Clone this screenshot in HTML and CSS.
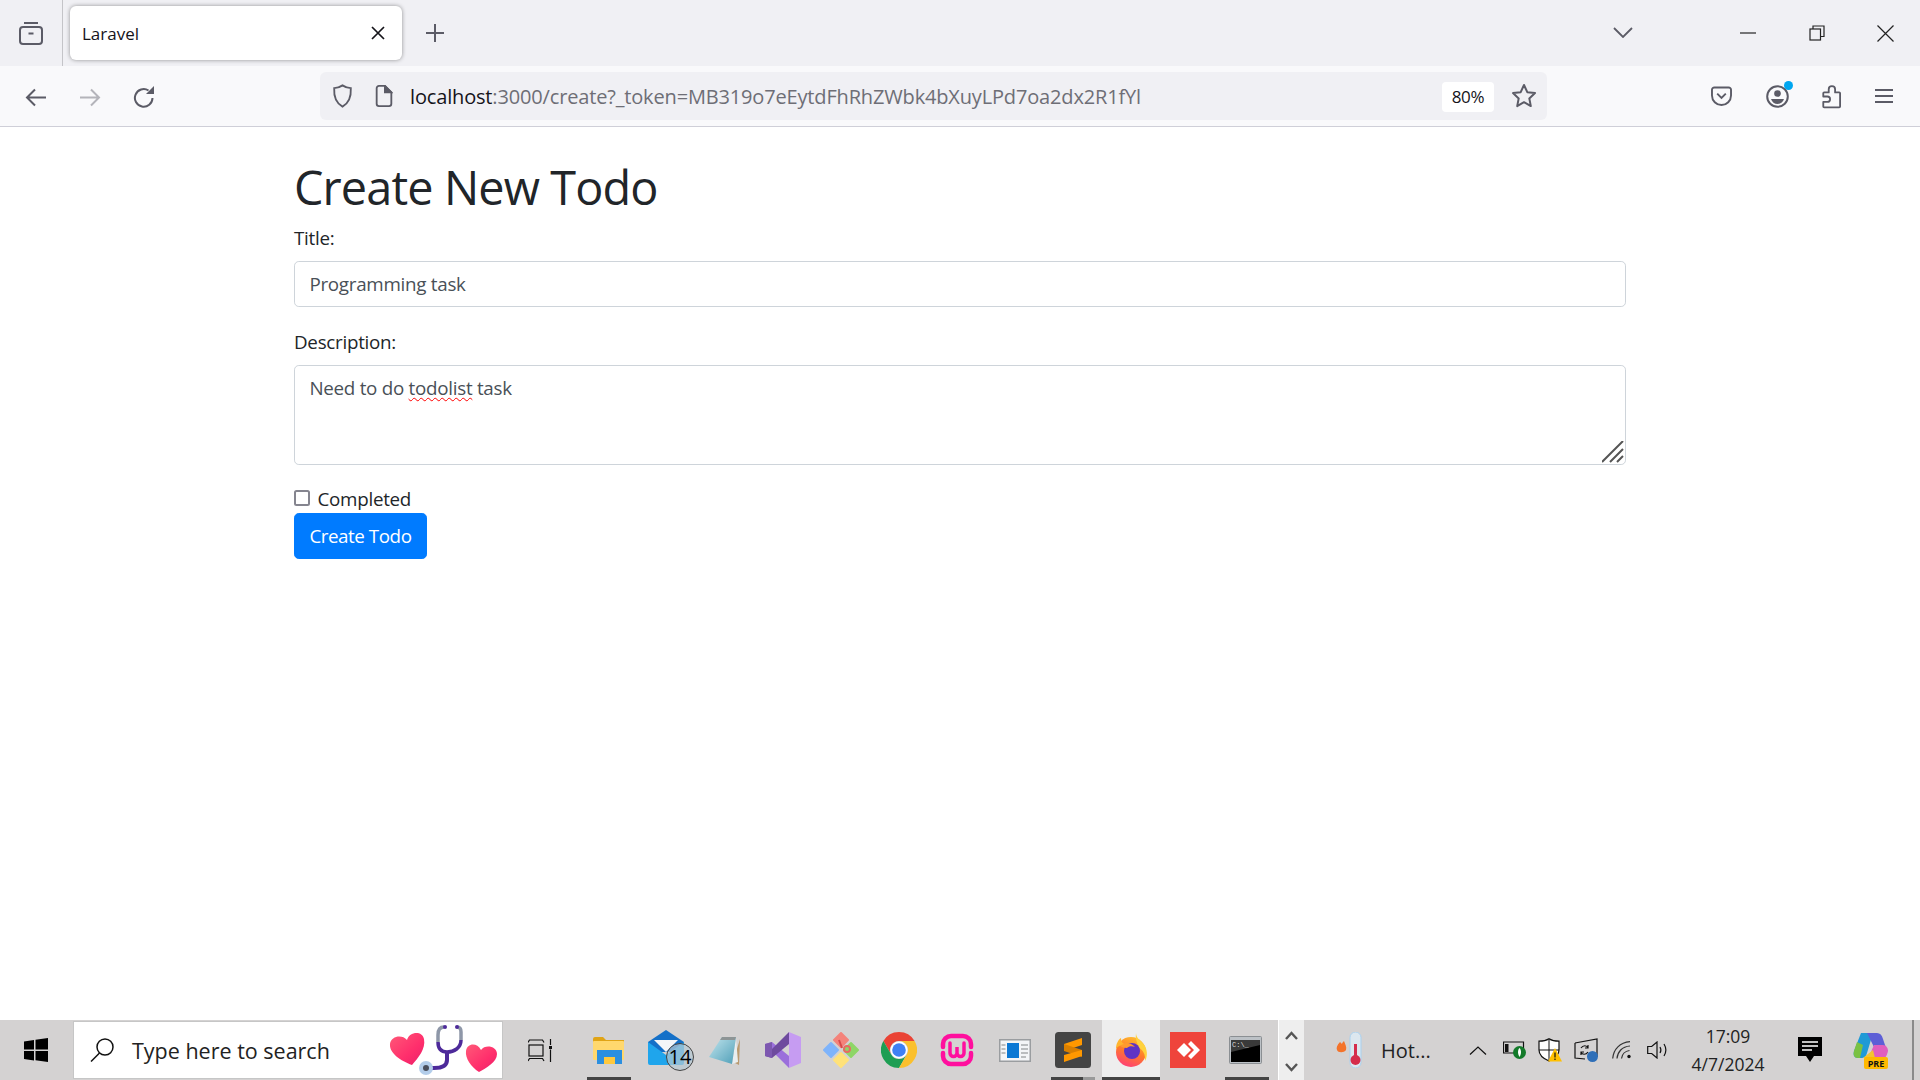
FILE: index.html
```html
<!DOCTYPE html>
<html>
<head>
<meta charset="UTF-8">
<title>Laravel</title>
<link rel="stylesheet" href="styles.css">
</head>
<body>

<!-- browser window chrome -->
<div class="tabbar">
  <div class="tabbar-left">
    <svg width="24" height="24" viewBox="0 0 24 24" fill="none" stroke="#5b5b66" stroke-width="2"><path d="M5 2h14"/><rect x="1" y="6" width="22" height="17" rx="3"/><path d="M9.500 12.500h5"/></svg>
  </div>
  <div class="tab">
    <span class="tab-title">Laravel</span>
    <svg width="14" height="14" viewBox="0 0 14 14" stroke="#15141a" stroke-width="1.700"><path d="M1 1l12 12M13 1L1 13"/></svg>
  </div>
  <div class="newtab">
    <svg width="18" height="18" viewBox="0 0 18 18" stroke="#5b5b66" stroke-width="2"><path d="M9 0v18M0 9h18"/></svg>
  </div>
  <div class="tabbar-space"></div>
  <svg class="tablist" width="20" height="11" viewBox="0 0 20 11" fill="none" stroke="#5b5b66" stroke-width="1.800"><path d="M1 1l9 9 9-9"/></svg>
  <div class="winbtns">
    <div class="winbtn"><svg width="16" height="16" viewBox="0 0 16 16" stroke="#222" stroke-width="1.200"><path d="M0 8h16"/></svg></div>
    <div class="winbtn"><svg width="16" height="16" viewBox="0 0 16 16" fill="none" stroke="#222" stroke-width="1.200"><rect x="1" y="4" width="10.500" height="11"/><path d="M4 4V1h11v10.500h-3.500"/></svg></div>
    <div class="winbtn"><svg width="17" height="17" viewBox="0 0 17 17" stroke="#222" stroke-width="1.200"><path d="M.5.5l16 16M16.500.5l-16 16"/></svg></div>
  </div>
</div>

<div class="toolbar">
  <div class="navbtns">
    <svg width="21" height="19" viewBox="0 0 21 19" fill="none" stroke="#5b5b66" stroke-width="2"><path d="M21 9.500H2M10 1.500l-8 8 8 8"/></svg>
    <svg width="21" height="19" viewBox="0 0 21 19" fill="none" stroke="#b4b4ba" stroke-width="2"><path d="M0 9.500h19M11 1.500l8 8-8 8"/></svg>
    <svg class="reload" width="22" height="22" viewBox="0 0 22 22" fill="none" stroke="#5b5b66" stroke-width="2"><path d="M19.500 12a8.800 8.800 0 1 1-4-7.500"/><path d="M21 0v8h-8z" fill="#5b5b66" stroke="none"/></svg>
  </div>
  <div class="urlbar">
    <svg width="21" height="24" viewBox="0 0 22 26" fill="none" stroke="#5b5b66" stroke-width="2"><path d="M11 1.500c3 2 6 3 9 3 .5 9-1.500 16-9 20-7.500-4-9.500-11-9-20 3 0 6-1 9-3z"/></svg>
    <svg class="pageico" width="18" height="22" viewBox="0 0 18 24" fill="none" stroke="#5b5b66" stroke-width="2"><path d="M3.500 1H10l7 7v12.500a2.500 2.500 0 0 1-2.500 2.500h-11A2.500 2.500 0 0 1 1 20.500v-17A2.500 2.500 0 0 1 3.500 1z"/><path d="M10 1v7h7z" fill="#5b5b66"/></svg>
    <div class="url"><span class="url-host">localhost</span>:3000/create?_token=MB319o7eEytdFhRhZWbk4bXuyLPd7oa2dx2R1fYl</div>
    <div class="zoombadge">80%</div>
    <svg class="star" width="26" height="26" viewBox="0 0 26 26" fill="none" stroke="#5b5b66" stroke-width="2" stroke-linejoin="round"><path d="M13 2l3.300 7.200 7.700.9-5.700 5.300 1.500 7.700L13 19.200l-6.800 3.900 1.500-7.700L2 10.100l7.700-.9z"/></svg>
  </div>
  <div class="toolbar-right">
    <svg width="21" height="20" viewBox="0 0 22 21" fill="none" stroke="#5b5b66" stroke-width="2"><path d="M3.500 1.500h15A2.500 2.500 0 0 1 21 4v6a10 10 0 0 1-20 0V4a2.500 2.500 0 0 1 2.500-2.500z"/><path d="M6.500 8L11 12.500 15.500 8"/></svg>
    <span class="account">
      <svg width="23" height="23" viewBox="0 0 23 23" fill="none" stroke="#5b5b66" stroke-width="2"><circle cx="11.500" cy="11.500" r="10.300"/><circle cx="11.500" cy="8.500" r="3.300" fill="#5b5b66" stroke="none"/><path d="M5 14h13c-1 3-3.500 5-6.500 5S6 17 5 14z" fill="#5b5b66" stroke="none"/></svg>
      <i class="account-dot"></i>
    </span>
    <svg class="extensions" width="20" height="25" viewBox="0 0 22 26" fill="none" stroke="#5b5b66" stroke-width="2" stroke-linejoin="round"><path d="M12 1.500c2 0 3.500 1.500 3.500 3.500v3.500H20a1 1 0 0 1 1 1V24a1 1 0 0 1-1 1H3.500a1 1 0 0 1-1-1v-5H7a2.500 2.500 0 0 0 0-6H2.500V9.500a1 1 0 0 1 1-1h5V5c0-2 1.500-3.500 3.500-3.500z"/></svg>
    <svg width="18" height="16" viewBox="0 0 18 16" stroke="#5b5b66" stroke-width="2"><path d="M0 2h18M0 8h18M0 14h18"/></svg>
  </div>
</div>

<!-- page -->
<div class="page">
  <div class="container">
    <h1>Create New Todo</h1>
    <div class="form-group">
      <label>Title:</label>
      <div class="form-control">Programming task</div>
    </div>
    <div class="form-group">
      <label>Description:</label>
      <div class="form-control textarea">Need to do <span class="misspelled">todolist</span> task
        <svg class="grip" width="22" height="22" viewBox="0 0 22 22" stroke="#555" stroke-width="2"><path d="M0 21L21 0M8 21L21 8M15 21l6-6"/></svg>
      </div>
    </div>
    <div class="form-check">
      <span class="checkbox"></span>
      <label>Completed</label>
    </div>
    <button class="btn">Create Todo</button>
  </div>
</div>

<!-- windows taskbar -->
<div class="taskbar">
  <div class="startbtn">
    <svg width="24" height="24" viewBox="0 0 24 24" fill="#000"><path d="M0 3.400l10-1.400v9.500H0zM11.500 1.800L24 0v11.500H11.500zM0 13h10v9.500L0 21zM11.500 13H24v11l-12.500-1.800z"/></svg>
  </div>
  <div class="searchbox">
    <svg width="24" height="24" viewBox="0 0 24 24" fill="none" stroke="#111" stroke-width="1.500"><circle cx="15" cy="9" r="8"/><path d="M9.500 15L1 23.500"/></svg>
    <span class="searchtext">Type here to search</span>
    <svg class="searchart" width="118" height="56" viewBox="0 0 118 56">
      <defs>
        <linearGradient id="heart" x1="0" y1="0" x2="1" y2="1"><stop offset="0" stop-color="#ff5a78"/><stop offset=".6" stop-color="#ff2e6c"/><stop offset="1" stop-color="#e8206a"/></linearGradient>
      </defs>
      <path d="M28 43C17 39 5 31 6 22C7 14 18 12 23 18C25 10 38 8 40 17C42 27 34 36 28 43Z" fill="url(#heart)"/>
      <path d="M95 50C87 45 81 36 82 29C83 21 93 20 97 28C101 22 113 24 113 32C113 40 102 46 95 50Z" fill="url(#heart)"/>
      <g fill="none" stroke-width="3.500">
        <path d="M60 5C55 5 54 9 54 13V20" stroke="#8e97a8"/>
        <path d="M73 5C76 5 77 7 77 10V18" stroke="#8e97a8"/>
        <path d="M54 20C54 28 58 30 63 30C70 30 77 26 77 18" stroke="#4d2a9a"/>
        <path d="M63 30V38C63 44 58 46 50 46H44" stroke="#4d2a9a" stroke-width="4"/>
      </g>
      <circle cx="61" cy="5" r="2" fill="#4d2a9a"/><circle cx="73" cy="5" r="2" fill="#4d2a9a"/>
      <circle cx="42" cy="46" r="7" fill="#b3cdea"/><circle cx="42" cy="46" r="3" fill="#4a4f5c"/>
    </svg>
  </div>
  <div class="taskview">
    <svg width="24" height="23" viewBox="0 0 24 23" fill="none" stroke="#111" stroke-width="1.200"><path d="M0 3.500L1.500 1H14.500L16 3.500"/><rect x="1" y="6" width="14" height="11"/><path d="M0 19.500L1.500 22H14.500L16 19.500" transform="matrix(1 0 0 -1 0 41.500)"/><path d="M22.500 0v6M22.500 10.500V23"/><rect x="21" y="7" width="3" height="3" fill="#111" stroke="none"/></svg>
  </div>
  <div class="apps">
    <div class="app running wide">
      <svg width="34" height="27" viewBox="0 0 34 27"><path d="M1 2a2 2 0 0 1 2-2h8l3 3h18v6H1z" fill="#e0a416"/><rect x="1" y="4" width="31" height="19" rx="1" fill="#ffd86e"/><path d="M5 27V13h25v14h-7v-7H12v7z" fill="#2b8fe0"/><rect x="12" y="20" width="11" height="7" fill="#ffc83d"/></svg>
    </div>
    <div class="app mail">
      <svg width="46" height="41" viewBox="0 0 46 41"><path d="M0 12L18 0l18 12v10H0z" fill="#1470c8"/><path d="M6 10h24l-12 12z" fill="#f4f6f8"/><path d="M0 12l18 13 18-13v21a2 2 0 0 1-2 2H2a2 2 0 0 1-2-2z" fill="#1fa5ec"/><circle cx="32" cy="27" r="13.500" fill="#b5c8d2" fill-opacity=".7" stroke="#444"/><text x="32" y="34" class="mailcount">14</text></svg>
    </div>
    <div class="app">
      <svg width="32" height="30" viewBox="0 0 32 30">
        <defs><linearGradient id="pad" x1="0" y1="0" x2="1" y2="1"><stop offset="0" stop-color="#c4e6ee"/><stop offset="1" stop-color="#4f9fb8"/></linearGradient></defs>
        <path d="M31 4l-1 26-6-3z" fill="#b99a70"/><path d="M27 3l2 24-6 2z" fill="#e8eef0"/><path d="M13 2h14L23 29 0 22z" fill="url(#pad)"/><path d="M13 2h14l-1 3H11z" fill="#8d9596"/>
      </svg>
    </div>
    <div class="app">
      <svg width="36" height="36" viewBox="0 0 36 36"><path d="M24 0l12 5v26l-12 5z" fill="#c69cf2"/><path d="M24 36V24L7 10 0 12z" fill="#9b6fdb"/><path d="M24 0v12L7 26l-7-2z" fill="#6e4a9e"/><path d="M0 12l7-2v16l-7-2z" fill="#7d58b0"/></svg>
    </div>
    <div class="app">
      <svg width="36" height="36" viewBox="0 0 36 36" stroke-linejoin="round" stroke-width="2"><path d="M18 1l7 7-7 7-7-7z" fill="#f4837b" stroke="#f4837b"/><path d="M8 11l7 7-7 7-7-7z" fill="#7fb4fb" stroke="#7fb4fb"/><path d="M28 11l7 7-7 7-7-7z" fill="#8ed667" stroke="#8ed667"/><path d="M18 21l7 7-7 7-7-7z" fill="#ffe27a" stroke="#ffe27a"/><path d="M16 8l3 8" stroke="#d94a4a" fill="none"/><circle cx="24" cy="17" r="3" fill="#8ed667" stroke="#e86a62"/></svg>
    </div>
    <div class="app">
      <svg width="36" height="36" viewBox="0 0 36 36"><path d="M18 0A18 18 0 0 1 33.600 9H18A9 9 0 0 0 10.200 22.500L2.400 9A18 18 0 0 1 18 0Z" fill="#ea4335"/><path d="M18 36A18 18 0 0 1 2.400 9L10.200 22.500A9 9 0 0 0 25.800 22.500Z" fill="#1e9e53"/><path d="M33.600 9A18 18 0 0 1 18 36L25.800 22.500A9 9 0 0 0 18 9Z" fill="#fbc02d"/><circle cx="18" cy="18" r="8.500" fill="#fff"/><circle cx="18" cy="18" r="6.800" fill="#3f80f4"/></svg>
    </div>
    <div class="app">
      <svg width="34" height="34" viewBox="0 0 34 34" fill="none" stroke="#ff0f9e" stroke-width="4.500" stroke-linecap="round"><path d="M3 14V11a8 8 0 0 1 8-8h12a8 8 0 0 1 8 8v3M3 20v3a8 8 0 0 0 8 8h12a8 8 0 0 0 8-8v-3"/><path d="M10 10v10a3.500 3.500 0 0 0 7 0v-6 6a3.500 3.500 0 0 0 7 0V10" stroke-width="3.500"/></svg>
    </div>
    <div class="app">
      <svg width="32" height="23" viewBox="0 0 32 23"><rect x=".75" y=".75" width="30.500" height="21.500" fill="#f3f5f7" stroke="#9a9da0" stroke-width="1.500"/><rect x="8" y="4" width="12" height="15" fill="#0a78d4"/><path d="M2.500 6h4M2.500 10h4M2.500 14h4M22 6h7M22 10h7M22 14h7M22 18h5" stroke="#a8abad" stroke-width="1.500"/></svg>
    </div>
    <div class="app running stacked">
      <svg width="36" height="36" viewBox="0 0 36 36"><rect width="36" height="36" rx="3.500" fill="#444"/><path d="M27 6v7L9 19v-7z" fill="#ff9800"/><path d="M9 12v7l18 6v-7z" fill="#d97f00"/><path d="M27 18v6L9 30v-7z" fill="#ff9800"/></svg>
    </div>
    <div class="app active">
      <svg width="34" height="34" viewBox="0 0 34 34">
        <defs>
          <linearGradient id="fox" x1=".7" y1="0" x2=".3" y2="1"><stop offset="0" stop-color="#ffbd2e"/><stop offset=".5" stop-color="#ff7a2a"/><stop offset="1" stop-color="#ff3d78"/></linearGradient>
        </defs>
        <circle cx="17" cy="19" r="15" fill="url(#fox)"/>
        <path d="M22 0c0 6 6 8 9 13 3 6 2 12 0 15 .5-7-2-11-6-13-2-5-4-10-3-15z" fill="#ffd23e"/>
        <circle cx="18" cy="18" r="8" fill="#5f33c4"/>
        <path d="M5 12c5-3 12-3 16 2-3-1-6-1-8 1-3 0-6-1-8-3z" fill="#ff9a2e"/>
        <path d="M2 16c0-5 2-9 5-11 0 3 1 5 3 6-3 1-6 2-8 5z" fill="#ffb52e"/>
      </svg>
    </div>
    <div class="app anydesk">
      <svg width="36" height="36" viewBox="0 0 36 36"><rect width="36" height="36" fill="#ef443b"/><path d="M14 11l7 7-7 7-7-7z" fill="#fff"/><path d="M21 9l9 9-9 9-3-3 6-6-6-6z" fill="#fff"/></svg>
    </div>
    <div class="app running terminal">
      <svg width="33" height="28" viewBox="0 0 33 28">
        <rect x=".5" y=".5" width="32" height="27" rx="1" fill="#bcc1c6" stroke="#8b8f93"/>
        <rect x="2" y="4" width="29" height="22" fill="#000"/>
        <path d="M2 4h29v5L2 16z" fill="#3a3a3a"/>
        <text x="3" y="11" class="cmdtext">C:\_</text>
      </svg>
    </div>
  </div>
  <div class="appscroll">
    <svg width="13" height="9" viewBox="0 0 13 9" fill="none" stroke="#555" stroke-width="2.400"><path d="M1 8l5.500-6L12 8"/></svg>
    <svg width="13" height="9" viewBox="0 0 13 9" fill="none" stroke="#555" stroke-width="2.400"><path d="M1 1l5.500 6L12 1"/></svg>
  </div>
  <div class="weather">
    <svg width="30" height="36" viewBox="0 0 30 36"><path d="M4 10C1 13 0 16 1 18c1 3 7 3 9 0 1-3-1-6-2-9-1 1-2 2-2 3z" fill="#f4732a"/><rect x="14" y="0" width="11" height="36" rx="5.500" fill="#dce7ef" stroke="#a9d1f0"/><circle cx="19.500" cy="28" r="5" fill="#d52d4c"/><rect x="18" y="12" width="3" height="16" fill="#d52d4c"/></svg>
    <span class="weather-text">Hot...</span>
  </div>
  <div class="tray">
    <svg width="18" height="9" viewBox="0 0 18 9" fill="none" stroke="#111" stroke-width="1.200"><path d="M1 8.500L9 1l8 7.500"/></svg>
    <svg width="23" height="18" viewBox="0 0 23 18"><path d="M.5 1h20v11H.5z" fill="none" stroke="#111" stroke-width="1.200"/><rect x="2" y="3" width="3.500" height="8" fill="#111"/><circle cx="16.500" cy="11.500" r="6.500" fill="#137a2a"/><path d="M16.500 7c2 2 2 6 0 9-2-3-2-7 0-9z" fill="#fff"/></svg>
    <svg width="24" height="24" viewBox="0 0 24 24"><path d="M11 .7c3 2 6 2.500 10 2.500V12c0 5-4 8.500-10 11C5 20.500 1 17 1 12V3.200c4 0 7-.5 10-2.500z" fill="#fff" stroke="#111" stroke-width="1.200"/><path d="M11 1v21M1 12h20" stroke="#111"/><path d="M17 10l7 13.500H10z" fill="#ffc000"/><path d="M17 14.500v5M17 20.500V22" stroke="#111" stroke-width="1.200"/></svg>
    <svg width="24" height="24" viewBox="0 0 24 24" fill="none" stroke="#111" stroke-width="1.200"><path d="M1 5L23 1v18M1 5v15l10 1"/><path d="M7 10c2-3 6-3 7 0M14 7v3h-3M14 14c-2 3-6 3-7 0M7 17v-3h3"/><circle cx="18.500" cy="18.500" r="5.500" fill="#2f6fb8" stroke="none"/></svg>
    <svg width="20" height="18" viewBox="0 0 20 18" fill="none" stroke="#333" stroke-width="1.200"><path d="M.7 17.500C1.500 8 8 1.500 18 .7M5 17.500C5.500 11 10 5.500 18 5M9.500 17.500c.5-4 3.500-7.500 8-8"/><circle cx="17" cy="15.500" r="1.700" fill="#111" stroke="none"/></svg>
    <svg width="22" height="18" viewBox="0 0 22 18" fill="none" stroke="#111" stroke-width="1.200"><path d="M.7 5.500h4L10 1v16l-5.300-4.500h-4z"/><path d="M13 6c1.200 2 1.200 4 0 6M17 3c2.500 4 2.500 8 0 12"/></svg>
  </div>
  <div class="clock">
    <span>17:09</span>
    <span>4/7/2024</span>
  </div>
  <div class="notif">
    <svg width="24" height="26" viewBox="0 0 24 26"><path d="M0 0h24v19h-8l-4 6-4-6H0z" fill="#000"/><path d="M4 5h16M4 9h16M4 13h10" stroke="#fff" stroke-width="1.300"/></svg>
  </div>
  <div class="copilot">
    <svg width="36" height="38" viewBox="0 0 36 38">
      <path d="M8 2h12l-6 20c-1 4-3 5-6 5H5C1 27 0 24 1 20z" fill="#1f9ad6"/>
      <path d="M5 27c-4 0-5-3-4-7l3-9 6 3-3 13z" fill="#7ac143"/>
      <path d="M14 2h10c3 0 5 2 6 6l4 12-13-4z" fill="#5d5fd6"/>
      <path d="M21 14h9c3 0 5 3 5 6-1 5-4 10-8 10H14z" fill="#e05fbe"/>
      <path d="M10 27h12l-2-8z" fill="#f4c430"/>
      <rect x="11" y="26" width="24" height="12" rx="2" fill="#ffb900"/>
      <text x="23" y="36" class="pretext">PRE</text>
    </svg>
  </div>
  <div class="showdesktop"></div>
</div>

</body>
</html>
```

FILE: styles.css
```css
html {
  font-size: 19.2px;
}

body {
  margin: 0;
  height: 100vh;
  overflow: hidden;
  display: flex;
  flex-direction: column;
  font-family: "Open Sans", "Noto Sans", sans-serif;
  color: #212529;
  background: #fff;
}

/* tabs row */
.tabbar {
  height: 66px;
  background: #f0f0f4;
  display: flex;
  align-items: center;
  flex: none;
}

.tabbar-left {
  width: 62px;
  height: 66px;
  border-right: 1px solid #c4c4c8;
  display: flex;
  align-items: center;
  justify-content: center;
}

.tab {
  width: 332px;
  height: 54px;
  margin-left: 7px;
  padding: 0 17px 0 12px;
  box-sizing: border-box;
  background: #fff;
  border-radius: 6px;
  box-shadow: 0 0 4px rgba(0, 0, 0, .4);
  display: flex;
  align-items: center;
  justify-content: space-between;
}

.tab-title {
  font-size: 17px;
  color: #15141a;
}

.newtab {
  margin-left: 24px;
  display: flex;
}

.tabbar-space {
  flex: 1;
}

.tablist {
  margin-right: 80px;
  margin-bottom: 2px;
}

.winbtns {
  display: flex;
}

.winbtn {
  width: 69px;
  height: 66px;
  display: flex;
  align-items: center;
  justify-content: center;
}

/* nav row */
.toolbar {
  height: 60px;
  background: #f9f9fb;
  border-bottom: 1px solid #cfcfd8;
  display: flex;
  align-items: center;
  flex: none;
}

.navbtns {
  width: 320px;
  padding: 2px 0 0 25px;
  box-sizing: border-box;
  display: flex;
  align-items: center;
  gap: 34px;
}

.reload {
  margin-left: -2px;
}

.urlbar {
  width: 1227px;
  height: 48px;
  background: #f0f0f4;
  border-radius: 6px;
  display: flex;
  align-items: center;
  padding: 0 10px 0 12px;
  box-sizing: border-box;
}

.pageico {
  margin-left: 22px;
}

.url {
  flex: 1;
  margin-left: 17px;
  padding-top: 1px;
  font-size: 20px;
  letter-spacing: -.16px;
  color: #6e6e76;
  white-space: nowrap;
}

.url-host {
  color: #15141a;
}

.zoombadge {
  width: 52px;
  height: 30px;
  margin-top: 1px;
  line-height: 30px;
  background: #fff;
  border-radius: 4px;
  text-align: center;
  font-size: 17px;
  letter-spacing: -.3px;
  color: #15141a;
}

.star {
  margin-left: 17px;
}

.toolbar-right {
  flex: 1;
  padding: 0 27px 0 164px;
  display: flex;
  align-items: center;
  justify-content: space-between;
}

.extensions {
  margin-left: -2px;
}

.account {
  position: relative;
  display: flex;
}

.account-dot {
  position: absolute;
  top: -4px;
  right: -4px;
  width: 9px;
  height: 9px;
  border-radius: 50%;
  background: #00a6f0;
}

/* page content */
.page {
  flex: 1;
  background: #fff;
}

.container {
  width: 1332px;
  margin: 0 auto;
  padding-top: 1.5rem;
  font-size: 18.8px;
  letter-spacing: -.27px;
}

h1 {
  margin: 0 0 6px;
  padding-top: 3.500px;
  font-size: 46.800px;
  font-weight: 400;
  letter-spacing: -.87px;
  line-height: 57.600px;
}

.form-group {
  margin-bottom: 19.700px;
}

label {
  display: inline-block;
  padding-top: 1px;
  margin-bottom: 8.600px;
  line-height: 28.800px;
}

.form-control {
  height: 45.600px;
  box-sizing: border-box;
  padding: 8.200px 14.400px 0;
  border: 1px solid #ced4da;
  border-radius: 4.800px;
  line-height: 28.800px;
  color: #495057;
}

.textarea {
  position: relative;
  height: 100px;
}

.misspelled {
  text-decoration: underline wavy #f00;
  text-decoration-thickness: 1.200px;
  text-underline-offset: 2px;
}

.grip {
  position: absolute;
  right: 1px;
  bottom: 1px;
}

.form-check {
  height: 28.800px;
  display: flex;
  align-items: center;
}

.form-check label {
  margin: 0 0 0 7.500px;
}

.checkbox {
  width: 16px;
  height: 16px;
  box-sizing: border-box;
  border: 2px solid #85858f;
  border-radius: 2.500px;
  background: #fff;
  margin-bottom: 2px;
}

.btn {
  display: block;
  height: 45.600px;
  padding: 0 14.400px;
  border: 1px solid #007bff;
  border-radius: 4.800px;
  background: #007bff;
  color: #fff;
  font-family: inherit;
  font-size: 18.800px;
  letter-spacing: -.45px;
}

/* taskbar */
.taskbar {
  height: 60px;
  background: #d4d2d2;
  display: flex;
  align-items: center;
  flex: none;
}

.startbtn {
  width: 72px;
  margin-right: 1px;
  display: flex;
  justify-content: center;
}

.searchbox {
  width: 430px;
  height: 58px;
  box-sizing: border-box;
  background: #fff;
  border: 1px solid #c6c6c6;
  display: flex;
  align-items: center;
  padding-left: 16px;
  position: relative;
}

.searchtext {
  margin-left: 18px;
  padding-top: 1px;
  font-size: 21.500px;
  color: #222;
  white-space: nowrap;
}

.searchart {
  position: absolute;
  right: 0;
  top: 0;
}

.taskview {
  width: 77px;
  padding-right: 3px;
  box-sizing: border-box;
  display: flex;
  justify-content: center;
}

.apps {
  display: flex;
  height: 60px;
}

.app {
  width: 58px;
  height: 60px;
  display: flex;
  align-items: center;
  justify-content: center;
  position: relative;
}

.app.running::after,
.app.active::after {
  content: "";
  position: absolute;
  left: 7px;
  right: 7px;
  bottom: 0;
  height: 3px;
  background: #444;
}

.app.stacked::before {
  content: "";
  position: absolute;
  right: 7px;
  bottom: 0;
  width: 12px;
  height: 3px;
  background: #999;
  z-index: 1;
}

.app.active {
  background: #eee;
}

.app.active::after {
  left: 0;
  right: 0;
}

.app.mail svg {
  margin-left: 8px;
}

.app.anydesk svg {
  margin-right: 2px;
}

.app.terminal svg {
  margin-right: 4px;
}

.mailcount {
  font-family: "Open Sans", sans-serif;
  font-size: 20px;
  text-anchor: middle;
  fill: #000;
}

.cmdtext {
  font-family: "Liberation Mono", monospace;
  font-size: 7px;
  fill: #ddd;
}

.pretext {
  font-family: "Open Sans", sans-serif;
  font-weight: 700;
  font-size: 9px;
  text-anchor: middle;
  fill: #111;
}

.appscroll {
  width: 25px;
  height: 41px;
  margin-left: 2px;
  background: #eee;
  border-left: 1px solid #fff;
  display: flex;
  flex-direction: column;
  align-items: center;
  justify-content: space-between;
  padding: 11px 0 8px;
}

.weather {
  width: 156px;
  padding-left: 32px;
  box-sizing: border-box;
  display: flex;
  align-items: center;
  gap: 15px;
}

.weather-text {
  font-size: 20px;
  color: #222;
}

.tray {
  display: grid;
  grid-template-columns: repeat(6, 36px);
  justify-items: center;
  align-items: center;
}

.clock {
  width: 104px;
  display: flex;
  flex-direction: column;
  align-items: center;
  gap: 6px;
  font-size: 17.500px;
  line-height: 22px;
  color: #222;
}

.notif {
  width: 60px;
  display: flex;
  justify-content: center;
}

.copilot {
  width: 60px;
  margin-left: 1px;
  display: flex;
  justify-content: center;
}

.showdesktop {
  flex: 1;
  height: 60px;
  border-left: 2px solid #8a8a8a;
  margin-left: 11px;
}
```
